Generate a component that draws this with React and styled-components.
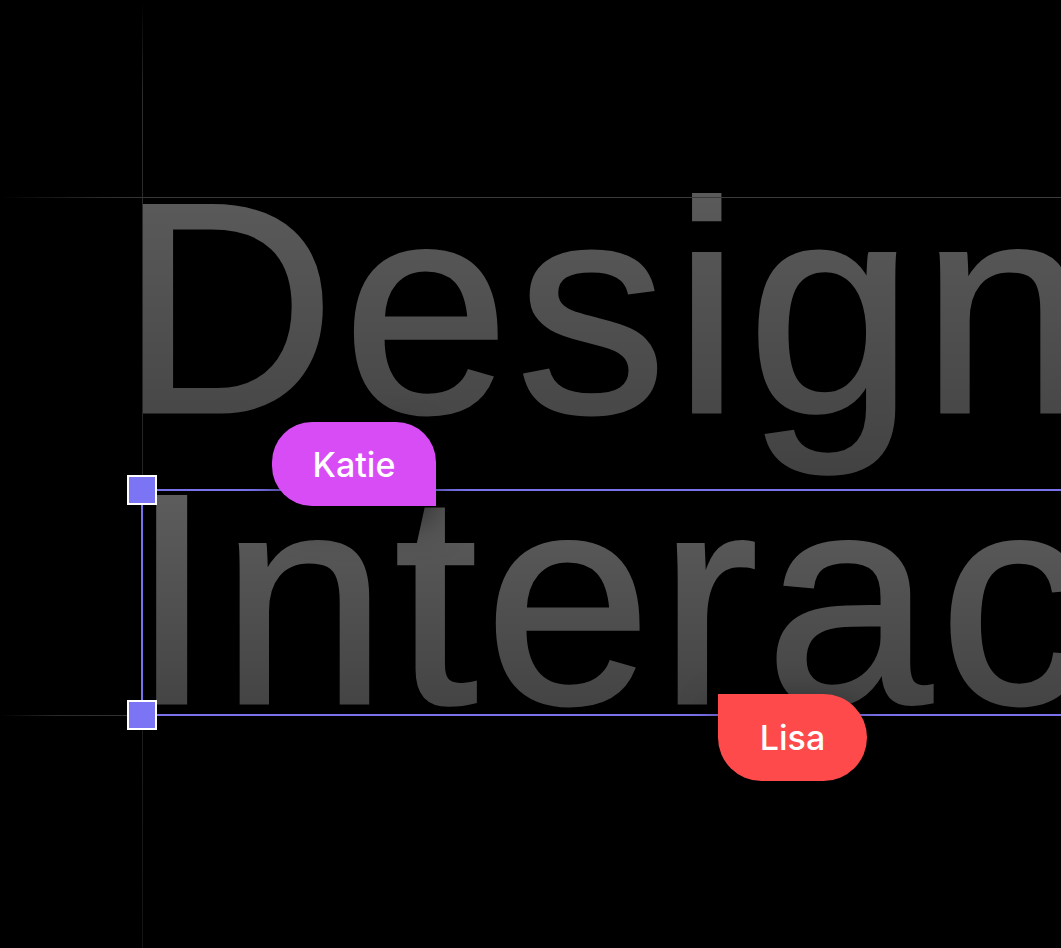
import React from 'react';
import styled, { createGlobalStyle } from 'styled-components';

const Global = createGlobalStyle`
  html, body { margin: 0; padding: 0; background: #000; }
  body { font-family: Inter, "Liberation Sans", sans-serif; }
`;

const Canvas = styled.div`
  position: relative;
  width: 1061px;
  height: 948px;
  overflow: hidden;
  background: #000;
  display: flex;
  flex-direction: column;
  padding: 161px 0 0 119px;
  box-sizing: border-box;
`;

const VGuide = styled.div`
  position: absolute;
  left: 142px;
  top: 0;
  width: 1px;
  height: 100%;
  background: linear-gradient(to bottom, rgba(40,40,40,0) 0%, #2c2c2c 10%, #2a2a2a 25%, #1f1f1f 70%, #141414 100%);
`;

const HGuide = styled.div`
  position: absolute;
  left: 0;
  top: ${p => p.$y}px;
  width: ${p => p.$w || 1061}px;
  height: 1px;
  background: ${p => p.$bg};
`;

const BigLine = styled.div`
  font-family: "Liberation Sans", Arial, sans-serif;
  font-size: 300px;
  font-weight: 400;
  letter-spacing: 7px;
  line-height: ${p => p.$lh}px;
  white-space: nowrap;
  padding-bottom: 70px;
  margin-bottom: -70px;
  margin-left: ${p => p.$indent || 0}px;
  background: linear-gradient(to bottom, #5d5d5d 0px, #444 ${p => p.$lh}px, #3c3c3c 100%);
  background-clip: text;
  -webkit-background-clip: text;
  color: transparent;
  -webkit-text-stroke: 3px transparent;
`;

const Frame = styled.div`
  position: relative;
  margin: 34px 0 0 22px;
  height: 223px;
  border: 2px solid #7a72ec;
  border-right: none;
`;

const Handle = styled.div`
  position: absolute;
  left: -16px;
  ${p => (p.$bottom ? 'bottom: -16px;' : 'top: -16px;')}
  width: 26px;
  height: 26px;
  background: #7b75f6;
  border: 2px solid #fff;
`;

const Tag = styled.div`
  position: absolute;
  left: ${p => p.$x}px;
  top: ${p => p.$y}px;
  width: ${p => p.$w}px;
  height: ${p => p.$h}px;
  display: flex;
  align-items: center;
  justify-content: center;
  background: ${p => p.$color};
  border-radius: ${p => p.$radius};
  color: #fff;
  font-family: Inter, Roboto, sans-serif;
  font-weight: 500;
  font-size: 34px;
  box-shadow: 0 14px 34px rgba(0, 0, 0, 0.55);
  z-index: 3;
`;

export default function App() {
  return (
    <>
      <Global />
      <Canvas>
        <VGuide />
        <HGuide $y={197} $bg="linear-gradient(to right, rgba(50,50,50,0) 0%, #2e2e2e 10%, #383838 14%, #3c3c3c 100%)" />
        <HGuide $y={715} $w={142} $bg="linear-gradient(to right, rgba(40,40,40,0) 0%, #2a2a2a 40%, #343434 100%)" />
        <BigLine $lh={294}>Design</BigLine>
        <Frame>
          <BigLine $lh={216} $indent={-13}>Interaction</BigLine>
          <Handle />
          <Handle $bottom />
        </Frame>
        <Tag $x={272} $y={422} $w={164} $h={84} $color="#d84cf6" $radius="40px 40px 0 40px">Katie</Tag>
        <Tag $x={718} $y={694} $w={149} $h={87} $color="#fe4a4b" $radius="0 44px 44px 44px">Lisa</Tag>
      </Canvas>
    </>
  );
}
